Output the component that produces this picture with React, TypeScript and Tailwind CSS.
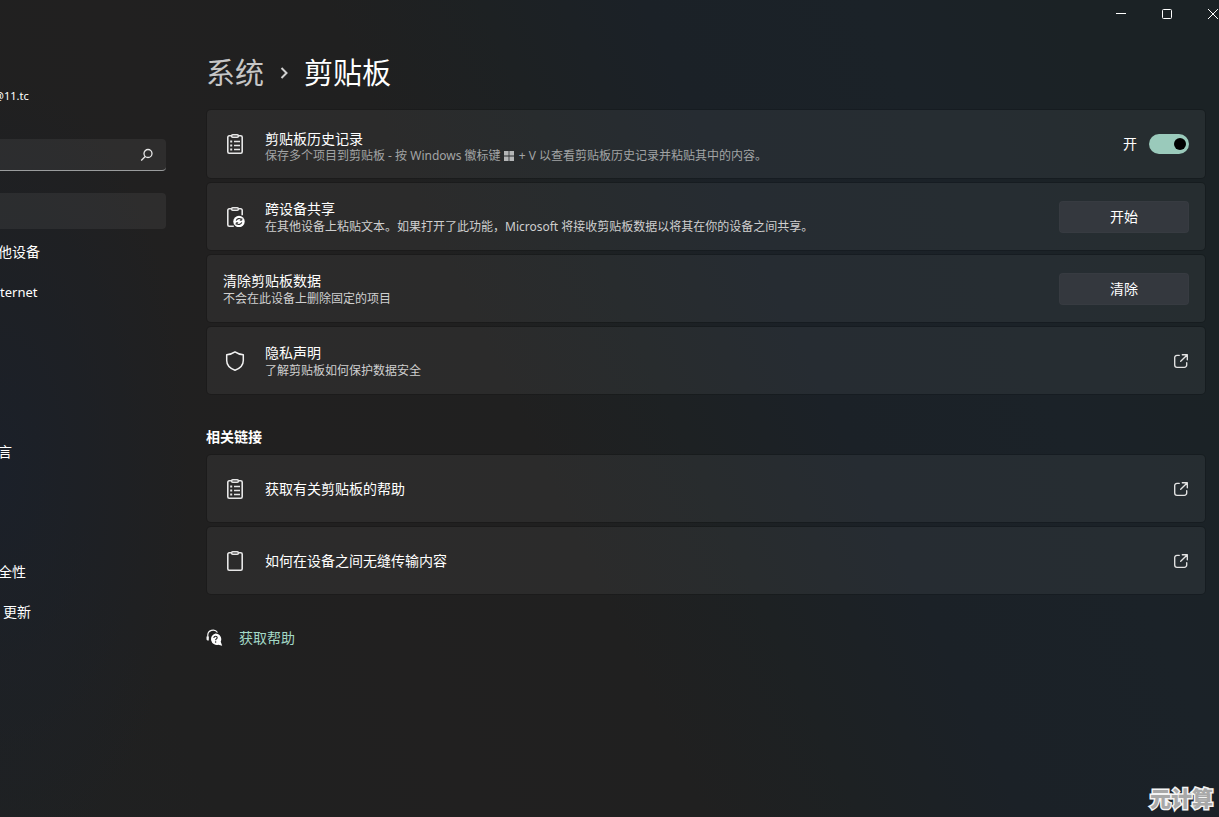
import { useState, type ReactNode } from "react";

const cardClass =
  "flex min-h-[69px] items-center rounded-[5px] border border-black/15 bg-white/[0.05] bg-clip-padding pr-4";

function ClipboardIcon({ variant = "plain" }: { variant?: "plain" | "list" | "sync" }) {
  return (
    <svg viewBox="0 0 20 20" className="size-5 shrink-0" fill="none" stroke="#e6e6e6" strokeWidth="1.6" aria-hidden="true">
      {variant === "sync" ? (
        <path d="M6.5 1.8H4.2a1.400 1.400 0 0 0-1.400 1.400v14.600a1.400 1.400 0 0 0 1.400 1.400h4.600M13.5 1.800h2.300a1.400 1.400 0 0 1 1.400 1.400v5" />
      ) : (
        <path d="M6.5 1.8H4.2a1.400 1.400 0 0 0-1.400 1.400v14.600a1.400 1.400 0 0 0 1.400 1.400h11.600a1.400 1.400 0 0 0 1.400-1.400V3.200a1.400 1.400 0 0 0-1.400-1.400h-2.300" />
      )}
      <rect x="6.6" y="0.8" width="6.8" height="2.4" rx="1.1" />
      {variant === "list" && (
        <>
          <path d="M9 7.5H15M9 11.5H15M9 15.500H15" strokeWidth="1.300" />
          <path d="M5.200 7.500h2M5.200 11.500h2M5.200 15.500h2" strokeWidth="2" />
        </>
      )}
      {variant === "sync" && (
        <>
          <circle cx="14" cy="14.5" r="5.7" fill="#fff" stroke="none" />
          <path d="M11.2 13.6a3 3 0 0 1 5.2-.9M16.8 15.4a3 3 0 0 1-5.2.9" stroke="#2b2b2b" strokeWidth="1.1" />
          <path d="M16.8 11.3v1.9h-2M11.2 17.7v-1.9h2" stroke="#2b2b2b" strokeWidth="1" />
        </>
      )}
    </svg>
  );
}

function ShieldIcon() {
  return (
    <svg viewBox="0 0 20 20" className="size-5 shrink-0" fill="none" stroke="#f2f2f2" strokeWidth="1.5" strokeLinejoin="round" aria-hidden="true">
      <path d="M10 .9c2.3 1.700 5 2.600 8.300 2.800v5.800c0 4.600-2.700 7.700-8.300 9.700-5.600-2-8.300-5.100-8.300-9.700V3.700C5 3.500 7.700 2.600 10 .9Z" />
    </svg>
  );
}

function OpenIcon() {
  return (
    <svg viewBox="0 0 16 16" className="size-4 shrink-0" fill="none" stroke="#e4e4e4" strokeWidth="1.35" strokeLinecap="round" strokeLinejoin="round" aria-hidden="true">
      <path d="M6.300 2.300H4a2.300 2.300 0 0 0-2.300 2.300V12A2.300 2.300 0 0 0 4 14.300h7.400a2.300 2.300 0 0 0 2.300-2.300V9.700" />
      <path d="M9.300 1.700h5v5M14.100 1.900 7.700 8.300" />
    </svg>
  );
}

function WindowsIcon() {
  return (
    <svg viewBox="0 0 10 10" className="ml-[3px] mr-0.5 inline-block size-2.5 align-[-1px]" fill="#b4b6b7" aria-hidden="true">
      <path d="M0 0h4.600v4.600H0zM5.400 0H10v4.600H5.400zM0 5.400h4.600V10H0zM5.400 5.400H10V10H5.400z" />
    </svg>
  );
}

function HelpIcon() {
  return (
    <svg viewBox="0 0 18 18" className="size-[18px] shrink-0" aria-hidden="true">
      <path d="M1.800 9.500V6.800A5.300 5.300 0 0 1 11.500 3.500" fill="none" stroke="#f4f4f4" strokeWidth="1.2" />
      <path d="M.5 7.500h2.300v4H1.600A1.200 1.200 0 0 1 .5 10.300Z" fill="#f4f4f4" />
      <path d="M9.500 4.500a5.800 5.800 0 0 1 5.200 8.300l1.500 3.900-4-.9A5.800 5.800 0 1 1 9.500 4.500Z" fill="#fff" />
      <path d="M7.900 8.900c0-2.200 3.300-2 3.300-.2 0 1.200-1.600 1.300-1.600 2.600" fill="none" stroke="#222" strokeWidth="1.100" />
      <circle cx="9.600" cy="13" r=".75" fill="#222" />
    </svg>
  );
}

function RowText({ title, children, dim }: { title: string; children: ReactNode; dim?: boolean }) {
  return (
    <div className={dim ? "min-w-0 flex-1 pt-1.5" : "min-w-0 flex-1 pt-0.5"}>
      <h2 className="text-sm leading-[18px] text-white">{title}</h2>
      <p className={dim ? "text-xs leading-4 text-[#a2a4a5]" : "text-xs leading-[18px] text-[#cfcfcf]"}>{children}</p>
    </div>
  );
}

function ActionButton({ children }: { children: ReactNode }) {
  return (
    <button type="button" className="h-8 w-[130px] shrink-0 rounded border border-white/[0.02] bg-[#34383e] text-sm text-white">
      {children}
    </button>
  );
}

const navItem = "flex h-9 items-center whitespace-nowrap pt-0.5 text-sm text-white";

export default function App() {
  const [history, setHistory] = useState(true);

  return (
    <div className="relative flex min-h-screen flex-col overflow-hidden bg-[radial-gradient(ellipse_190px_400px_at_0_58%,#1b2029_0%,#1b202900_100%),linear-gradient(65deg,#1f2122_0%,#202020_14%,#212020_30%,#202020_44%,#1d2123_54%,#1b2127_64%,#1b2228_78%,#1b2225_90%,#1b2225_100%)] font-['Noto_Sans','Noto_Sans_CJK_SC',sans-serif] text-white">
      <header className="-mr-[17px] flex h-7 shrink-0 justify-end">
        <button type="button" aria-label="最小化" className="flex w-[46px] items-center justify-center">
          <svg viewBox="0 0 10 10" className="size-2.5" stroke="#fff"><path d="M0 4.500h10" /></svg>
        </button>
        <button type="button" aria-label="最大化" className="flex w-[46px] items-center justify-center">
          <svg viewBox="0 0 10 10" className="size-2.5" fill="none" stroke="#fff"><rect x=".5" y=".5" width="9" height="9" rx="1" /></svg>
        </button>
        <button type="button" aria-label="关闭" className="flex w-[46px] items-center justify-center">
          <svg viewBox="0 0 10 10" className="size-2.5" stroke="#fff"><path d="M0 0l10 10M10 0L0 10" /></svg>
        </button>
      </header>

      <div className="flex flex-1">
        <aside className="w-[166px] shrink-0 pt-[59px]">
          <p className="-ml-1.5 text-[11px] leading-[18px]">@11.tc</p>
          <div className="mt-[34px] flex h-8 items-center rounded-r border-b border-[#9a9c9d] bg-white/[0.06] pr-3">
            <input type="search" aria-label="查找设置" className="h-full min-w-0 flex-1 bg-transparent px-2 text-sm outline-none" />
            <svg viewBox="0 0 14 14" className="size-3.5" fill="none" stroke="#e6e6e6" strokeWidth="1.300" aria-hidden="true">
              <circle cx="8" cy="5.500" r="4" />
              <path d="M5.200 8.500 1.200 12.500" />
            </svg>
          </div>
          <nav className="mt-[22px] flex flex-col gap-1">
            <a href="#system" aria-label="系统" aria-current="page" className="h-9 rounded-r bg-white/[0.06]" />
            <a href="#devices" className={`${navItem} -ml-0.5`}>他设备</a>
            <a href="#network" className={`${navItem} text-[13px]`}>ternet</a>
            <a href="#language" className={`${navItem} -ml-0.5 mt-[120px]`}>言</a>
            <a href="#privacy" className={`${navItem} -ml-0.5 mt-20`}>全性</a>
            <a href="#update" className={`${navItem} pl-[3px]`}>更新</a>
          </nav>
        </aside>

        <main className="ml-10 min-w-0 flex-1 pr-[13px] pt-[27px]">
          <h1 className="flex items-center text-[29px] leading-9">
            <a href="#system" className="text-[#c6c6c6]">系统</a>
            <svg viewBox="0 0 10 14" className="mx-[15px] h-3.5 w-2.5" fill="none" stroke="#d0d0d0" strokeWidth="2" aria-hidden="true">
              <path d="M2.500 2l5 5-5 5" />
            </svg>
            <span>剪贴板</span>
          </h1>

          <div className="mt-[18px] flex flex-col gap-[3px]">
            <section className={`${cardClass} h-[70px] gap-5 pl-[18px]`}>
              <ClipboardIcon variant="list" />
              <RowText title="剪贴板历史记录" dim>
                保存多个项目到剪贴板 - 按 Windows 徽标键<WindowsIcon /> + V 以查看剪贴板历史记录并粘贴其中的内容。
              </RowText>
              <label className="flex shrink-0 items-center gap-3 text-sm">
                开
                <input
                  type="checkbox"
                  role="switch"
                  aria-label="剪贴板历史记录"
                  checked={history}
                  onChange={(e) => setHistory(e.target.checked)}
                  className="flex h-5 w-10 appearance-none items-center rounded-full bg-[#5b5f61] px-[3px] before:block before:size-3 before:rounded-full before:bg-black checked:justify-end checked:bg-[#9acabb]"
                />
              </label>
            </section>
            <section className={`${cardClass} gap-5 pl-[18px]`}>
              <ClipboardIcon variant="sync" />
              <RowText title="跨设备共享">
                在其他设备上粘贴文本。如果打开了此功能，Microsoft 将接收剪贴板数据以将其在你的设备之间共享。
              </RowText>
              <ActionButton>开始</ActionButton>
            </section>
            <section className={`${cardClass} gap-5 pl-4`}>
              <RowText title="清除剪贴板数据">不会在此设备上删除固定的项目</RowText>
              <ActionButton>清除</ActionButton>
            </section>
            <a href="#statement" className={`${cardClass} gap-5 pl-[18px]`}>
              <ShieldIcon />
              <RowText title="隐私声明">了解剪贴板如何保护数据安全</RowText>
              <OpenIcon />
            </a>
          </div>

          <h2 className="mb-[7px] mt-8 text-sm font-semibold leading-5">相关链接</h2>
          <div className="flex flex-col gap-[3px]">
            <a href="#clipboard-help" className={`${cardClass} gap-5 pl-[18px]`}>
              <ClipboardIcon variant="list" />
              <span className="flex-1 text-sm">获取有关剪贴板的帮助</span>
              <OpenIcon />
            </a>
            <a href="#transfer-help" className={`${cardClass} gap-5 pl-[18px]`}>
              <ClipboardIcon />
              <span className="flex-1 text-sm">如何在设备之间无缝传输内容</span>
              <OpenIcon />
            </a>
          </div>

          <a href="#help" className="mt-[33px] flex w-fit items-center gap-[15px] text-sm leading-5 text-[#a3d8c6]">
            <HelpIcon />
            获取帮助
          </a>
        </main>
      </div>

      <div className="absolute bottom-[5px] right-1.5 text-[21px] font-black leading-7 text-[#a8a8a8] [-webkit-text-stroke:3px_#f4f4f4] [paint-order:stroke_fill]">
        元计算
      </div>
    </div>
  );
}
